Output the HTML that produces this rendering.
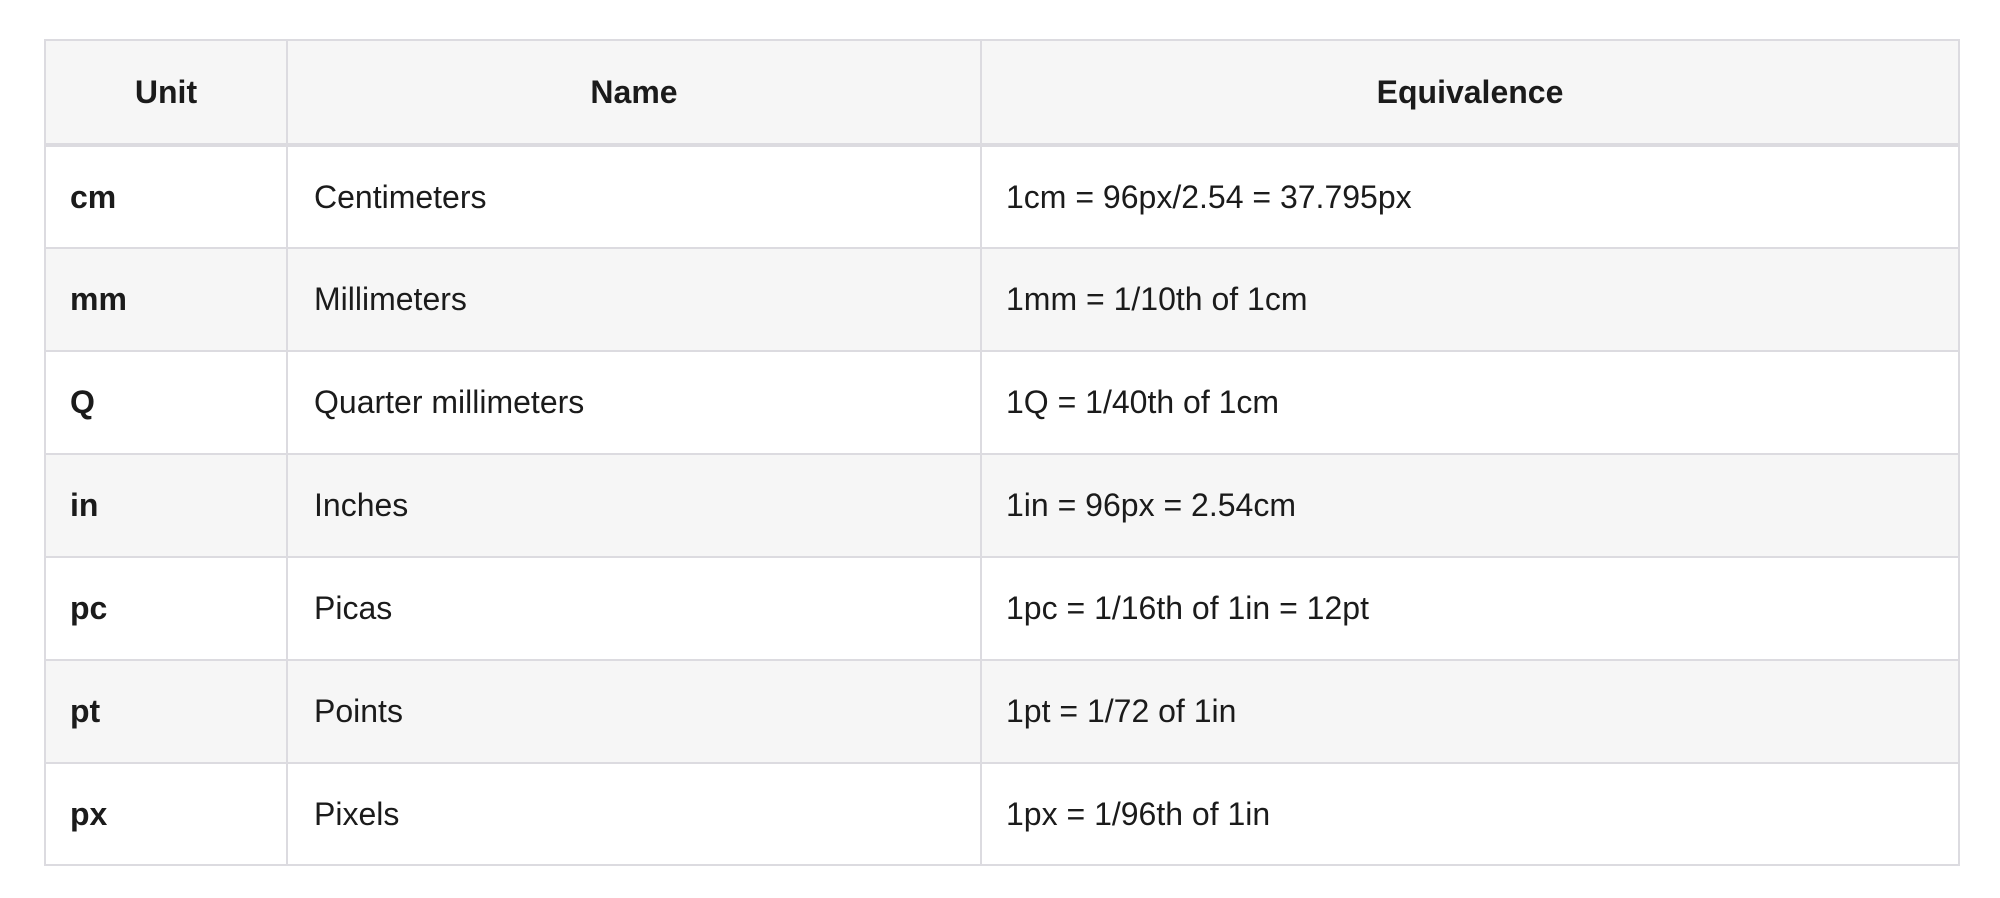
<!DOCTYPE html>
<html><head><style>
html,body{margin:0;padding:0;background:#fff;width:2000px;height:898px;overflow:hidden}
body{font-family:"Liberation Sans",sans-serif;color:#1b1b1b;font-size:32px}
.t{position:absolute;left:44px;top:39px;width:1916px;height:827px;box-sizing:border-box;border:2px solid #dcdbe0}
.r{position:absolute;left:0;width:1912px;display:flex;align-items:center}
.c{position:absolute;top:0;bottom:0;display:flex;align-items:center;box-sizing:border-box}
.v{position:absolute;top:0;bottom:0;width:2px;background:#dcdbe0}
.h{position:absolute;left:0;width:1912px;height:2px;background:#dcdbe0}
b{font-weight:bold}
</style></head><body>
<div class="t">
<div class="r" style="top:0;height:102px;background:#f6f6f6;font-weight:bold">
 <div class="c" style="left:0;width:240px;justify-content:center">Unit</div>
 <div class="c" style="left:242px;width:692px;justify-content:center">Name</div>
 <div class="c" style="left:936px;width:976px;justify-content:center">Equivalence</div>
</div>
<div class="h" style="top:102px;height:4px"></div>

<div class="r" style="top:106px;height:100px;background:#fff"><div class="c" style="left:24px"><b>cm</b></div><div class="c" style="left:268px">Centimeters</div><div class="c" style="left:960px">1cm = 96px/2.54 = 37.795px</div></div>
<div class="h" style="top:206px"></div>
<div class="r" style="top:208px;height:101px;background:#f6f6f6"><div class="c" style="left:24px"><b>mm</b></div><div class="c" style="left:268px">Millimeters</div><div class="c" style="left:960px">1mm = 1/10th of 1cm</div></div>
<div class="h" style="top:309px"></div>
<div class="r" style="top:311px;height:101px;background:#fff"><div class="c" style="left:24px"><b>Q</b></div><div class="c" style="left:268px">Quarter millimeters</div><div class="c" style="left:960px">1Q = 1/40th of 1cm</div></div>
<div class="h" style="top:412px"></div>
<div class="r" style="top:414px;height:101px;background:#f6f6f6"><div class="c" style="left:24px"><b>in</b></div><div class="c" style="left:268px">Inches</div><div class="c" style="left:960px">1in = 96px = 2.54cm</div></div>
<div class="h" style="top:515px"></div>
<div class="r" style="top:517px;height:101px;background:#fff"><div class="c" style="left:24px"><b>pc</b></div><div class="c" style="left:268px">Picas</div><div class="c" style="left:960px">1pc = 1/16th of 1in = 12pt</div></div>
<div class="h" style="top:618px"></div>
<div class="r" style="top:620px;height:101px;background:#f6f6f6"><div class="c" style="left:24px"><b>pt</b></div><div class="c" style="left:268px">Points</div><div class="c" style="left:960px">1pt = 1/72 of 1in</div></div>
<div class="h" style="top:721px"></div>
<div class="r" style="top:723px;height:100px;background:#fff"><div class="c" style="left:24px"><b>px</b></div><div class="c" style="left:268px">Pixels</div><div class="c" style="left:960px">1px = 1/96th of 1in</div></div>

<div class="v" style="left:240px"></div>
<div class="v" style="left:934px"></div>
</div>
</body></html>
